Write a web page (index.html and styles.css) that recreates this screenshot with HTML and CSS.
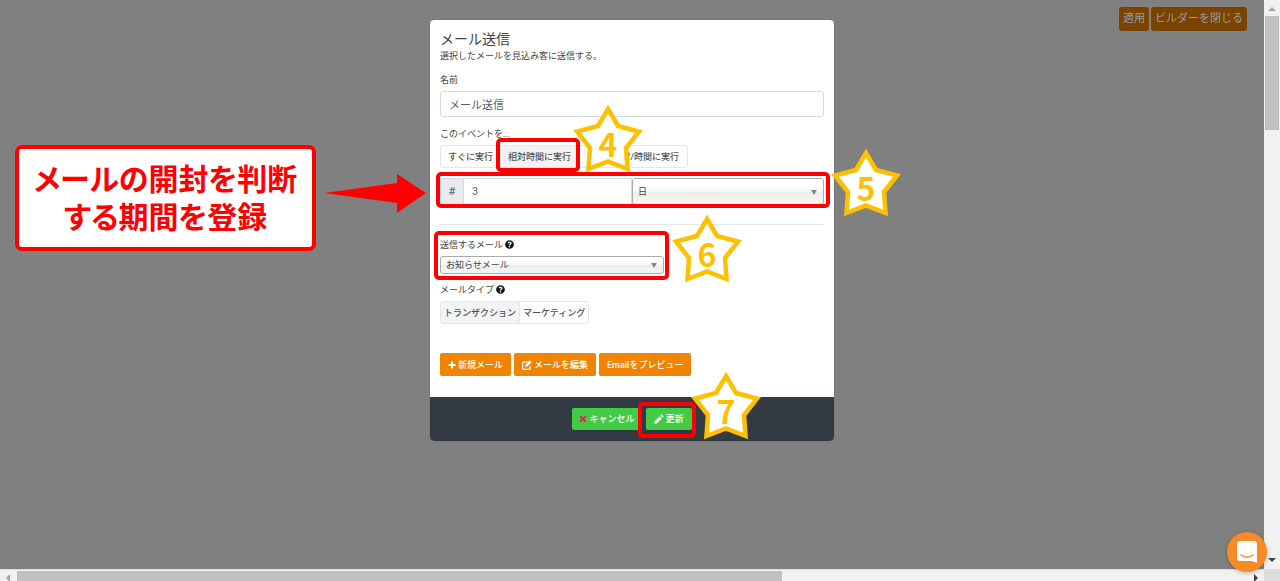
FILE: index.html
```html
<!DOCTYPE html>
<html lang="ja">
<head>
<meta charset="utf-8">
<title>メール送信</title>
<link rel="stylesheet" href="styles.css">
</head>
<body>
<svg class="defs" aria-hidden="true">
  <symbol id="star" viewBox="0 0 72 68"><path d="M36 4 46 21 67 26.500 54 43 55.500 64 36 56.500 16.500 64 18 43 5 26.500 26 21Z" fill="#fff" stroke="#ffc000" stroke-width="4.500"/></symbol>
  <symbol id="help" viewBox="0 0 512 512"><path fill="currentColor" d="M504 256a248 248 0 1 1-496 0 248 248 0 0 1 496 0zM262 90c-54 0-89 23-116 64-4 5-3 12 2 16l35 26c5 4 13 3 17-2 18-23 30-36 57-36 21 0 46 13 46 33 0 15-12 23-33 34-24 14-56 31-56 73v4c0 7 5 12 12 12h56c7 0 12-5 12-12v-1c0-30 86-31 86-111 0-60-63-100-118-100zm-6 248a46 46 0 1 0 0 92 46 46 0 0 0 0-92z"/></symbol>
  <symbol id="plus" viewBox="0 0 16 16"><path d="M8 1v14M1 8h14" stroke="currentColor" stroke-width="4"/></symbol>
  <symbol id="edit" viewBox="0 0 16 16"><path d="M9 3H2.500Q1 3 1 4.500v9Q1 15 2.500 15h9q1.500 0 1.500-1.500V10" fill="none" stroke="currentColor" stroke-width="2"/><path d="M12.500 0.500 15.500 3.500 8.500 10.500 5 11.500 5.500 7.500Z" fill="currentColor"/></symbol>
  <symbol id="pencil" viewBox="0 0 16 16"><path d="M12 0.500 15.500 4 13.500 6 10 2.500ZM9 3.500 12.500 7 4.500 15 0.500 15.500 1 11.500Z" fill="currentColor"/></symbol>
  <symbol id="times" viewBox="0 0 16 16"><path d="M2.500 2.500 13.500 13.500M13.500 2.500 2.500 13.500" stroke="currentColor" stroke-width="4"/></symbol>
</svg>
<div class="screen">
  <main class="page">
    <div class="toolbar">
      <button class="tool" type="button">適用</button>
      <button class="tool" type="button">ビルダーを閉じる</button>
    </div>
    <form class="modal">
      <div class="body">
        <h1 class="title">メール送信</h1>
        <p class="lead">選択したメールを見込み客に送信する。</p>
        <label class="label" for="name">名前</label>
        <input class="field" id="name" type="text" value="メール送信">
        <p class="label trigger">このイベントを...</p>
        <div class="group">
          <button class="choice" type="button">すぐに実行</button>
          <button class="choice on" type="button">相対時間に実行</button>
          <button class="choice date" type="button">付/時間に実行</button>
        </div>
        <div class="interval">
          <label class="addon" for="amount">#</label>
          <input class="amount" id="amount" type="text" value="3">
          <div class="picker"><select class="select tall" aria-label="単位"><option>日</option></select></div>
        </div>
        <hr class="rule">
        <label class="label" for="mail">送信するメール <svg class="help"><use href="#help"/></svg></label>
        <div class="picker mail"><select class="select" id="mail"><option>お知らせメール</option></select></div>
        <p class="label type">メールタイプ <svg class="help"><use href="#help"/></svg></p>
        <div class="group">
          <button class="choice slim on" type="button">トランザクション</button>
          <button class="choice slim" type="button">マーケティング</button>
        </div>
        <div class="actions">
          <button class="action" type="button"><svg class="icon"><use href="#plus"/></svg>新規メール</button>
          <button class="action" type="button"><svg class="icon wide"><use href="#edit"/></svg>メールを編集</button>
          <button class="action" type="button">Emailをプレビュー</button>
        </div>
      </div>
      <footer class="footer">
        <button class="action confirm dismiss" type="button"><svg class="icon cancel"><use href="#times"/></svg>キャンセル</button>
        <button class="action confirm" type="button"><svg class="icon wide"><use href="#pencil"/></svg>更新</button>
      </footer>
      <div class="mark mark-relative"></div>
      <div class="mark mark-interval"></div>
      <div class="mark mark-mail"></div>
      <div class="mark mark-save"></div>
      <svg class="step step-4"><use href="#star"/><text x="36" y="52">4</text></svg>
      <svg class="step step-5"><use href="#star"/><text x="36" y="52">5</text></svg>
      <svg class="step step-6"><use href="#star"/><text x="36" y="52">6</text></svg>
      <svg class="step step-7"><use href="#star"/><text x="36" y="52">7</text></svg>
      <div class="callout">メールの開封を判断<br>する期間を登録</div>
      <svg class="arrow" viewBox="0 0 102 40"><path d="M0 19 73 9V0L102 19 73 39V29Z" fill="red"/></svg>
    </form>
  </main>
  <div class="vbar">
    <svg class="tip" viewBox="0 0 16 16"><path d="M4 11h8L8 7Z" fill="#a3a3a3"/></svg>
    <div class="vthumb"></div>
    <svg class="tip end" viewBox="0 0 16 16"><path d="M4 5h8L8 9Z" fill="#404040"/></svg>
  </div>
  <div class="hbar">
    <svg class="tip" viewBox="0 0 16 12"><path d="M10 4v8L6 8Z" fill="#a3a3a3"/></svg>
    <div class="hthumb"></div>
    <svg class="tip end" viewBox="0 0 16 12"><path d="M6 4v8L10 8Z" fill="#404040"/></svg>
  </div>
  <div class="corner"></div>
  <button class="chat" type="button" aria-label="チャット"><svg viewBox="0 0 20 22"><path d="M3 0H17Q20 0 20 3V22L15 20H3Q0 20 0 17V3Q0 0 3 0Z" fill="#fff"/><path d="M4 14Q10 18.500 16 14" fill="none" stroke="#f98b25" stroke-width="1.500" stroke-linecap="round"/></svg></button>
</div>
</body>
</html>
```
FILE: styles.css
```css
* { box-sizing: border-box; }
body {
  margin: 0;
  color: #444;
  font: 9px/14px Roboto, "Noto Sans CJK JP", sans-serif;
}
button, input, select { font: inherit; color: inherit; margin: 0; }
h1, p { margin: 0; font-weight: 400; }
.defs { position: absolute; width: 0; height: 0; }

.screen {
  position: relative;
  display: grid;
  grid-template: 1fr 12px / 1fr 16px;
  min-height: 100vh;
  overflow: hidden;
}
.page {
  position: relative;
  background: #808080;
  padding: 20px 0;
}
.toolbar {
  position: absolute;
  top: 7px;
  right: 17px;
  display: flex;
  gap: 2px;
}
.tool {
  height: 24px;
  padding: 0 4px;
  border: 0;
  border-radius: 3px;
  background: #7a4400;
  color: #999;
  font-size: 11px;
}

.modal {
  position: relative;
  width: 404px;
  margin: 0 auto;
  border-radius: 4px;
  background: #fff;
  box-shadow: 0 0 1px #444;
}
.body { padding: 9px 10px 21px; }
.title { font-size: 14px; line-height: 20px; }
.lead { margin-bottom: 10px; }
.label { display: block; }
.field {
  display: block;
  width: 100%;
  height: 26px;
  margin: 4px 0 10px;
  padding: 0 8px;
  border: 1px solid #d5dae2;
  border-radius: 3px;
  color: #555e69;
  font-size: 11px;
}
.trigger { margin-bottom: 4px; }
.group { display: flex; }
.choice {
  height: 23px;
  padding: 0 7px;
  border: 1px solid #e4e7ea;
  background: #fff;
  color: #47535f;
  font-weight: 500;
  white-space: nowrap;
}
.choice + .choice { margin-left: -1px; }
.choice:first-child { border-radius: 3px 0 0 3px; }
.choice:last-child { border-radius: 0 3px 3px 0; }
.choice.on { background: #f3f3f3; }
.date { width: 110px; padding-right: 8px; text-align: right; }
.choice.slim { padding: 0 3px; }

.interval { display: flex; margin-top: 10px; height: 27px; }
.addon {
  width: 24px;
  border: 1px solid #d5dae2;
  border-radius: 3px 0 0 3px;
  background: #e7eaee;
  color: #555e69;
  font-size: 11px;
  line-height: 25px;
  text-align: center;
}
.amount {
  flex: 1;
  min-width: 0;
  padding: 0 8px;
  border: 1px solid #d5dae2;
  border-left: 0;
  color: #555e69;
  font-size: 11px;
}
.picker { position: relative; width: 192px; }
.picker::after {
  content: "";
  position: absolute;
  right: 7px;
  top: 50%;
  margin-top: -2px;
  border: solid transparent;
  border-width: 5px 3px 0;
  border-top-color: #888;
  pointer-events: none;
}
.picker.mail { width: 224px; margin-top: 4px; }
.select {
  appearance: none;
  display: block;
  width: 100%;
  height: 18px;
  padding: 0 5px;
  border: 1px solid #aaa;
  border-radius: 3px;
  background: linear-gradient(#fff 20%, #f6f6f6 50%, #eee 52%, #f4f4f4);
  color: #444;
}
.tall { height: 27px; }
.rule {
  margin: 19px 0 13px;
  border: 0;
  border-top: 1px solid #e5e7e9;
}
.help {
  width: 9px;
  height: 9px;
  vertical-align: -1px;
  color: #111;
}
.type { margin: 9px 0 4px; }
.actions { display: flex; gap: 3px; margin-top: 29px; }
.action {
  display: flex;
  align-items: center;
  justify-content: center;
  gap: 2px;
  height: 23px;
  padding: 0 8px;
  border: 0;
  border-radius: 2px;
  background: #f08300;
  color: #fff;
  font-weight: 500;
  white-space: nowrap;
}
.icon { width: 8px; height: 8px; }
.icon.wide { width: 10px; height: 10px; }
.icon.cancel { color: #e02848; }
.footer {
  display: flex;
  justify-content: center;
  gap: 4px;
  padding: 11px;
  border-radius: 0 0 4px 4px;
  background: #343a43;
}
.confirm { background: #43cb45; height: 22px; }
.dismiss { padding: 0 7px; }

.mark {
  position: absolute;
  border: 4px solid red;
  border-radius: 5px;
  pointer-events: none;
}
.mark-relative { left: 66px; top: 118px; width: 84px; height: 34px; }
.mark-interval { left: 6px; top: 152px; width: 394px; height: 36px; }
.mark-mail { left: 4px; top: 211px; width: 235px; height: 49px; }
.mark-save { left: 208px; top: 382px; width: 58px; height: 36px; }
.step {
  position: absolute;
  width: 72px;
  height: 68px;
  fill: #ffc000;
  font-family: "Noto Sans CJK JP", sans-serif;
  font-size: 32px;
  font-weight: 700;
  text-anchor: middle;
}
.step-4 { left: 142px; top: 85px; }
.step-5 { left: 400px; top: 129px; }
.step-6 { left: 241px; top: 195px; }
.step-7 { left: 260px; top: 352px; }
.callout {
  position: absolute;
  left: -415px;
  top: 125px;
  padding: 12px 14px 10px;
  width: 301px;
  border: 4px solid red;
  border-radius: 7px;
  background: #fff;
  color: red;
  font-size: 30px;
  font-weight: 700;
  font-feature-settings: "palt";
  line-height: 38px;
  text-align: center;
  white-space: nowrap;
}
.arrow { position: absolute; left: -106px; top: 154px; width: 102px; height: 40px; }

.vbar {
  display: flex;
  flex-direction: column;
  align-items: center;
  background: #f1f1f1;
}
.vthumb { width: 14px; height: 114px; background: #c1c1c1; }
.hbar {
  display: flex;
  background: #f1f1f1;
  border-top: 1px solid #ddd;
}
.hthumb { width: 60.5%; margin: 1px 0 0 1px; background: #c1c1c1; }
.tip { width: 16px; height: 16px; flex: none; }
.hbar .tip { height: 12px; }
.vbar .end { margin-top: auto; }
.hbar .end { margin-left: auto; }
.corner { background: #dcdcdc; }
.chat {
  position: absolute;
  right: 13px;
  bottom: 9px;
  display: grid;
  place-items: center;
  width: 40px;
  height: 40px;
  padding: 0;
  border: 0;
  border-radius: 50%;
  background: #f98b25;
  box-shadow: 0 1px 4px #0004;
}
.chat svg { width: 20px; height: 22px; }
```
